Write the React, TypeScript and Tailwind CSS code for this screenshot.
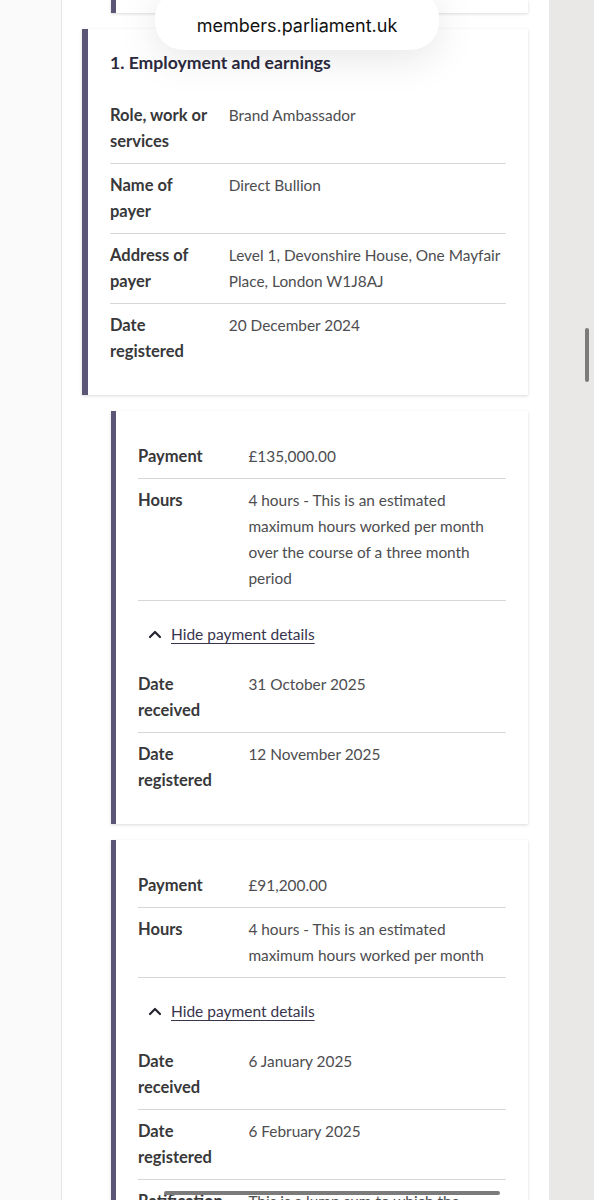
import React from "react";

type RowProps = { label: string[]; value: string[]; border?: boolean };

const Row = ({ label, value, border }: RowProps) => (
  <div
    className={
      border
        ? "grid grid-cols-[30%_1fr] pt-[8px] pb-[9px] border-b border-[#d6d6da]"
        : "grid grid-cols-[30%_1fr] pt-[8px] pb-[9px]"
    }
  >
    <div className="font-bold text-[16.5px] text-[#38383a] whitespace-nowrap">
      {label.map((l, i) => (
        <div key={i}>{l}</div>
      ))}
    </div>
    <div className="text-[#4d4d50] text-[15.4px] whitespace-nowrap">
      {value.map((v, i) => (
        <div key={i}>{v}</div>
      ))}
    </div>
  </div>
);

const HideRow = () => (
  <div className="flex items-center pt-[20px] pb-[16px] pl-[10px]">
    <svg width="14" height="10" viewBox="0 0 14 10" className="mr-[9px]">
      <polyline
        points="2,8 7,3 12,8"
        fill="none"
        stroke="#26232f"
        strokeWidth="2.2"
        strokeLinecap="round"
        strokeLinejoin="round"
      />
    </svg>
    <span className="underline underline-offset-[3px] decoration-1 text-[15.5px] text-[#38344d]">
      Hide payment details
    </span>
  </div>
);

export default function App() {
  return (
    <div
      className="relative w-[594px] h-[1200px] overflow-hidden bg-white text-[16px] leading-[26px]"
      style={{ fontFamily: "Lato, 'Noto Sans', sans-serif" }}
    >
      <div className="flex h-full items-start">
        <div className="w-[62px] h-full shrink-0 bg-[#fafafa] border-r border-[#e6e6e6]" />
        <div className="w-[487px] h-full shrink-0 bg-white pl-[20px] pr-[21px] flex flex-col gap-[16px]">
          {/* partial previous card */}
          <div className="shrink-0 ml-[29px] h-[13px] bg-white border-l-[5px] border-[#5b5676] shadow-[0_1px_3px_rgba(0,0,0,0.15)]" />

          {/* Card 1 */}
          <div className="shrink-0 bg-white border-l-[6px] border-[#5b5676] shadow-[0_1px_3px_rgba(0,0,0,0.15)] pl-[22px] pr-[22px] pt-[21px] pb-[22px]">
            <div className="font-bold text-[17.6px] leading-[26px] text-[#2b2a3e] mb-[18px]">
              1. Employment and earnings
            </div>
            <Row label={["Role, work or", "services"]} value={["Brand Ambassador"]} border />
            <Row label={["Name of", "payer"]} value={["Direct Bullion"]} border />
            <Row
              label={["Address of", "payer"]}
              value={["Level 1, Devonshire House, One Mayfair", "Place, London W1J8AJ"]}
              border
            />
            <Row label={["Date", "registered"]} value={["20 December 2024"]} />
          </div>

          {/* Card 2 */}
          <div className="shrink-0 ml-[29px] bg-white border-l-[5px] border-[#5b5676] shadow-[0_1px_3px_rgba(0,0,0,0.15)] pl-[22px] pr-[22px] pt-[24px] pb-[22px]">
            <Row label={["Payment"]} value={["£135,000.00"]} border />
            <Row
              label={["Hours"]}
              value={[
                "4 hours - This is an estimated",
                "maximum hours worked per month",
                "over the course of a three month",
                "period",
              ]}
              border
            />
            <HideRow />
            <Row label={["Date", "received"]} value={["31 October 2025"]} border />
            <Row label={["Date", "registered"]} value={["12 November 2025"]} />
          </div>

          {/* Card 3 */}
          <div className="shrink-0 ml-[29px] bg-white border-l-[5px] border-[#5b5676] shadow-[0_1px_3px_rgba(0,0,0,0.15)] pl-[22px] pr-[22px] pt-[24px] pb-[22px]">
            <Row label={["Payment"]} value={["£91,200.00"]} border />
            <Row
              label={["Hours"]}
              value={["4 hours - This is an estimated", "maximum hours worked per month"]}
              border
            />
            <HideRow />
            <Row label={["Date", "received"]} value={["6 January 2025"]} border />
            <Row label={["Date", "registered"]} value={["6 February 2025"]} border />
            <Row label={["Ratification"]} value={["This is a lump sum to which the"]} />
          </div>
        </div>
        <div className="flex-1 h-full bg-[#e9e8e6]" />
      </div>

      {/* URL pill overlay */}
      <div className="absolute left-[155px] top-[-10px] w-[284px] h-[60px] rounded-[28px] bg-white shadow-[0_8px_40px_rgba(0,0,0,0.10)] flex items-end justify-center pb-[13px]">
        <span
          className="text-[18px] leading-[22px] text-[#111]"
          style={{ fontFamily: "Inter, 'Noto Sans', sans-serif" }}
        >
          members.parliament.uk
        </span>
      </div>

      {/* vertical scrollbar */}
      <div className="absolute left-[585px] top-[328px] w-[4px] h-[54px] rounded-full bg-[#7b7b7b]" />

      {/* horizontal scrollbar */}
      <div className="absolute left-[164px] top-[1191px] w-[336px] h-[4px] rounded-full bg-[#7b7b7b]" />
    </div>
  );
}
